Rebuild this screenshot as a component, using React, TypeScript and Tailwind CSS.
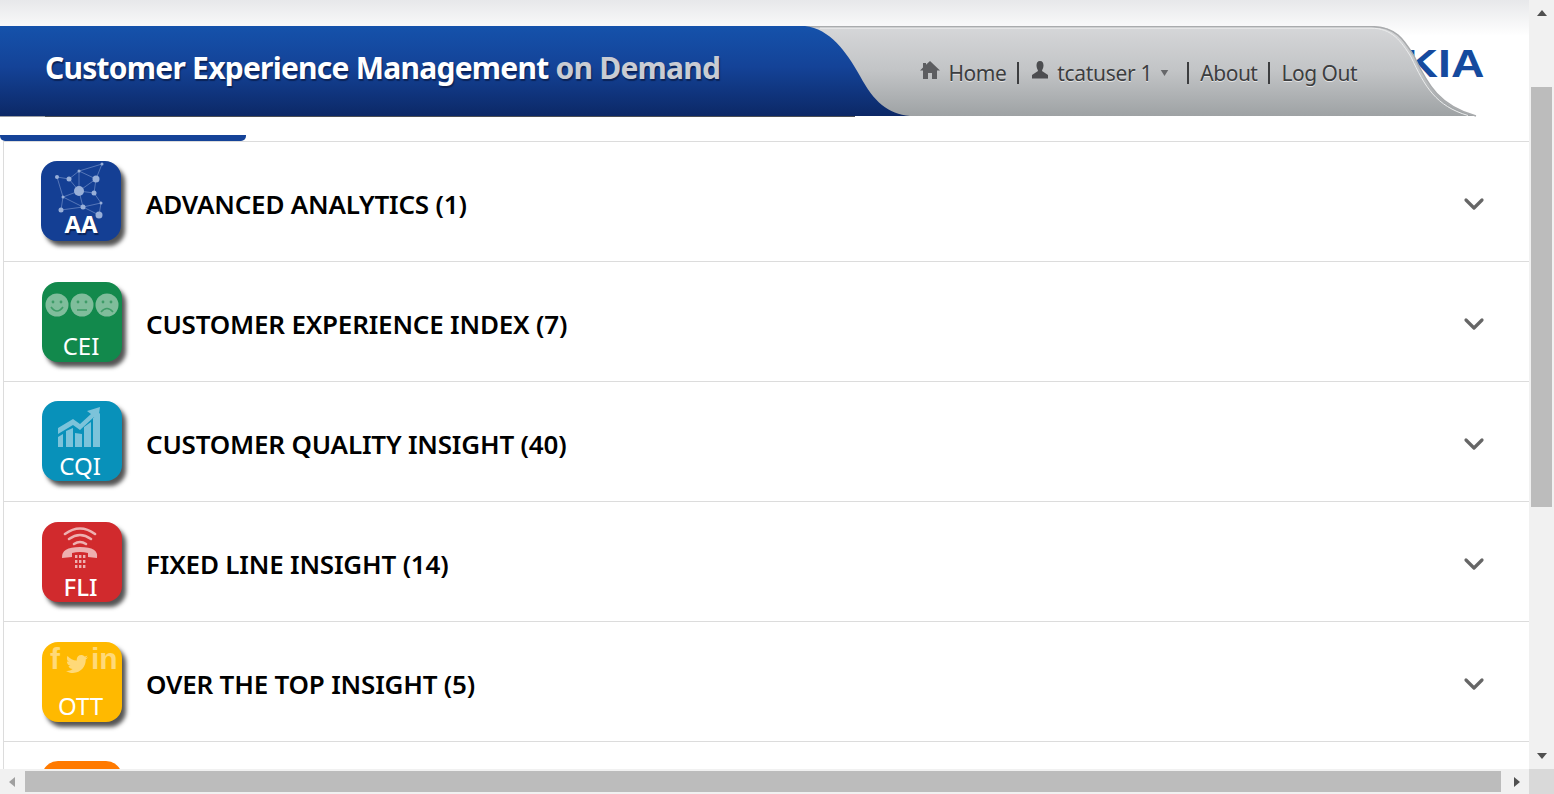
import { ChevronDown } from "lucide-react"
import { FaTwitter } from "react-icons/fa"

const font = "font-['Noto_Sans','Open_Sans',sans-serif]"

function NetworkGlyph() {
  const nodes = [
    [16, 16, 2], [28, 18, 2.5], [38, 10, 1.5], [55, 18, 3.5], [61, 3, 1.5], [38, 30, 5],
    [53, 32, 2.5], [22, 36, 1.5], [42, 46, 2.5], [60, 42, 1.5], [20, 49, 2.5], [58, 54, 3.5],
  ]
  const links = [
    [0, 1], [1, 2], [2, 3], [2, 4], [3, 4], [1, 5], [3, 5], [5, 6], [5, 7], [5, 8], [6, 9],
    [8, 9], [7, 10], [8, 10], [8, 11], [9, 11], [0, 7], [6, 3], [2, 5], [7, 8],
  ]
  return (
    <svg viewBox="0 0 80 60" className="h-[60px] w-20">
      {links.map(([a, b], i) => (
        <line key={i} x1={nodes[a][0]} y1={nodes[a][1]} x2={nodes[b][0]} y2={nodes[b][1]} stroke="#6684c0" strokeWidth="0.8" />
      ))}
      {nodes.map(([x, y, r], i) => (
        <circle key={i} cx={x} cy={y} r={r} fill="#98afd8" />
      ))}
    </svg>
  )
}

function FacesGlyph() {
  const mouths = ["M9 25 Q15 33 21 25", "M35 28 H45", "M59 30 Q65 23 71 30"]
  return (
    <svg viewBox="0 0 80 60" className="h-[60px] w-20">
      {[15, 40, 65].map((cx, i) => (
        <g key={cx}>
          <circle cx={cx} cy={23} r={11.5} fill="#7fbd9b" />
          <circle cx={cx - 4} cy={20} r={1.4} fill="#3f9c68" />
          <circle cx={cx + 4} cy={20} r={1.4} fill="#3f9c68" />
          <path d={mouths[i]} fill="none" stroke="#3f9c68" strokeWidth="1.6" />
        </g>
      ))}
    </svg>
  )
}

function ChartGlyph() {
  return (
    <svg viewBox="0 0 80 60" className="h-[60px] w-20">
      <g fill="#7cc3da">
        <path d="M16 46V36L21 33V46Z" />
        <path d="M24 46V30L31 27V46Z" />
        <path d="M33 46V32L40 33V46Z" />
        <path d="M42 46V26L49 21V46Z" />
        <path d="M51 46V17L58 12V46Z" />
        <path d="M16 27L31 18L38 23L49 13L45 10L58 6L56 20L52 16L38 29L31 24L16 33Z" />
      </g>
    </svg>
  )
}

function PhoneGlyph() {
  return (
    <svg viewBox="0 0 80 60" className="h-[60px] w-20">
      <g fill="none" stroke="#eeb0b0" strokeWidth="2.6" strokeLinecap="round">
        <path d="M23 12Q38 1 53 12" />
        <path d="M27 17Q38 9 49 17" />
        <path d="M32 22Q38 18 44 22" />
      </g>
      <path d="M20 36Q19 25 38 25Q57 25 55 36L46 35V31Q38 29 30 31V35Z" fill="#eeb0b0" />
      <g fill="#eeb0b0">
        {[33, 38, 43].map((y) =>
          [33, 37, 41].map((x) => <rect key={`${x}-${y}`} x={x} y={y} width="2.4" height="3" />)
        )}
      </g>
    </svg>
  )
}

function SocialGlyph() {
  return (
    <div className="relative flex h-[60px] w-20 items-start font-['Liberation_Sans',sans-serif] text-[30px] leading-none font-bold text-[#ffd978]">
      <span className="ml-[8px] mt-[2px]">f</span>
      <FaTwitter className="ml-[6px] mt-[11px] h-[22px] w-[22px]" />
      <span className="ml-[3px] mt-[2px]">in</span>
    </div>
  )
}

interface Tile {
  label: string
  title: string
  bg: string
  place: string
  labelClass: string
  glyph: React.ReactNode
}

const tiles: Tile[] = [
  { label: "AA", title: "ADVANCED ANALYTICS (1)", bg: "bg-[#143f94]", place: "pl-[37px] pt-[19px]", labelClass: "-mt-[9px] font-bold [text-shadow:1px_2px_1px_#0b2358]", glyph: <NetworkGlyph /> },
  { label: "CEI", title: "CUSTOMER EXPERIENCE INDEX (7)", bg: "bg-[#12894c]", place: "pl-[38px] pt-5", labelClass: "-mt-[8px] pr-[2px] font-normal", glyph: <FacesGlyph /> },
  { label: "CQI", title: "CUSTOMER QUALITY INSIGHT (40)", bg: "bg-[#0891ba]", place: "pl-[38px] pt-[19px]", labelClass: "-mt-[7px] pr-[4px] font-normal", glyph: <ChartGlyph /> },
  { label: "FLI", title: "FIXED LINE INSIGHT (14)", bg: "bg-[#d12a2d]", place: "pl-[38px] pt-5", labelClass: "-mt-[7px] pr-[3px] font-medium", glyph: <PhoneGlyph /> },
  { label: "OTT", title: "OVER THE TOP INSIGHT (5)", bg: "bg-[#ffb900]", place: "pl-[38px] pt-5", labelClass: "-mt-[8px] pr-[3px] font-normal", glyph: <SocialGlyph /> },
]

function Row({ tile }: { tile: Tile }) {
  return (
    <div className="flex h-[120px] items-start border-b border-[#dcdcdc] pr-[39px]">
      <div className={`w-[142px] shrink-0 ${tile.place}`}>
        <div className={`flex h-20 w-20 flex-col items-center rounded-2xl text-white shadow-[4px_5px_4px_#555] ${tile.bg}`}>
          {tile.glyph}
          <span className={`text-[24px] leading-6 ${tile.labelClass}`}>{tile.label}</span>
        </div>
      </div>
      <span className="mt-[44px] text-[26px] leading-9 font-semibold tracking-[-0.2px] text-black">
        {tile.title}
      </span>
      <ChevronDown size={32} strokeWidth={2.4} className="ml-auto mt-[46px] text-[#666]" />
    </div>
  )
}

function Header() {
  return (
    <header className="h-[117px] bg-[linear-gradient(#e7e8ea,#ffffff_36px)] pt-[26px]">
      <div className="relative flex h-[91px] items-center">
        <span className="absolute right-[45px] top-[16px] origin-right scale-x-[1.22] font-['Liberation_Sans',sans-serif] text-[38px] leading-[44px] font-bold text-[#154a9e]">
          KIA
        </span>
        <svg viewBox="0 0 1529 91" className="absolute inset-0 h-full w-full" preserveAspectRatio="none">
          <defs>
            <linearGradient id="band" x1="0" y1="0" x2="0" y2="1">
              <stop offset="0" stopColor="#1552ab" />
              <stop offset="0.45" stopColor="#144398" />
              <stop offset="1" stopColor="#0c2866" />
            </linearGradient>
            <linearGradient id="tab" x1="0" y1="0" x2="0" y2="1">
              <stop offset="0" stopColor="#d6d7d9" />
              <stop offset="0.5" stopColor="#c2c4c6" />
              <stop offset="1" stopColor="#9ea2a4" />
            </linearGradient>
          </defs>
          <path d="M800 0H1372C1396 0 1404 14 1414 30C1428 60 1440 80 1476 90H880Z" fill="url(#tab)" />
          <path d="M800 0.7H1372C1396 0.7 1404 14 1414 30C1428 60 1440 80 1476 90" fill="none" stroke="#a9abad" strokeWidth="1.5" />
          <path d="M820 2.2H1371C1392 2.2 1401 15 1411 31C1425 61 1436 80 1468 89.5" fill="none" stroke="#eceded" strokeWidth="1" />
          <path d="M0 0H805C830 3 846 25 860 50C874 76 888 88 910 90H0Z" fill="url(#band)" />
          <path d="M45 90.5H855" stroke="#4c4f55" strokeWidth="1" />
          <path d="M0 90.5H45" stroke="#9a9da3" strokeWidth="1" />
        </svg>
        <h1 className="relative mb-[8px] ml-[45px] text-[30px] leading-10 font-bold tracking-[-0.76px] text-white [text-shadow:1px_2px_1px_#0b2358]">
          Customer Experience Management <span className="text-[#c9ccd3]">on Demand</span>
        </h1>
        <nav className="relative ml-auto mr-[172px] mt-[2px] flex items-center text-[21px] leading-7 tracking-[-0.5px] text-[#3c3d3f] [text-shadow:0_1px_0_#e4e5e6]">
          <svg viewBox="0 0 22 20" className="mb-[5px] mr-[8px] h-[20px] w-[22px]" fill="#5c5d60">
            <path d="M11 1L21 10.5H18V19H13V13H9V19H4V10.5H1L4 7.6V3H7V4.8Z" />
          </svg>
          <span>Home</span>
          <span className="ml-[11px] mr-[11px] h-[22px] w-[2px] bg-[#3c3d3f]" />
          <svg viewBox="0 0 20 20" className="mb-[5px] mr-[7px] h-[20px] w-[20px]" fill="#4c4d50">
            <path d="M10 1C7.5 1 6.5 3 6.5 5.5C6.5 8 7.8 9.5 8 11L2 15V18.5H18V15L12 11C12.2 9.5 13.5 8 13.5 5.5C13.5 3 12.5 1 10 1Z" />
          </svg>
          <span className="tracking-[-0.3px]">tcatuser 1</span>
          <svg viewBox="0 0 10 8" className="ml-[8px] mr-[18px] h-[6px] w-[9px]" fill="#66676a">
            <path d="M0 0H10L5 8Z" />
          </svg>
          <span className="mr-[11px] h-[22px] w-[2px] bg-[#3c3d3f]" />
          <span>About</span>
          <span className="mx-[11px] h-[22px] w-[2px] bg-[#3c3d3f]" />
          <span>Log Out</span>
        </nav>
      </div>
    </header>
  )
}

function VerticalScrollbar() {
  return (
    <div className="flex w-[25px] shrink-0 flex-col items-center bg-[#f1f1f1]">
      <svg viewBox="0 0 10 6" className="mt-[10px] h-[6px] w-[10px]" fill="#505050">
        <path d="M5 0L10 6H0Z" />
      </svg>
      <div className="mt-[71px] h-[420px] w-[21px] bg-[#bcbcbc]" />
      <svg viewBox="0 0 10 6" className="mb-[10px] mt-auto h-[6px] w-[10px]" fill="#505050">
        <path d="M0 0H10L5 6Z" />
      </svg>
    </div>
  )
}

function HorizontalScrollbar() {
  return (
    <div className="flex h-[25px] shrink-0 items-center bg-[#f1f1f1]">
      <svg viewBox="0 0 6 10" className="ml-[9px] mr-[10px] h-[10px] w-[6px]" fill="#a0a0a0">
        <path d="M6 0V10L0 5Z" />
      </svg>
      <div className="h-[21px] w-[1476px] bg-[#bcbcbc]" />
      <svg viewBox="0 0 6 10" className="ml-[13px] h-[10px] w-[6px]" fill="#505050">
        <path d="M0 0L6 5L0 10Z" />
      </svg>
      <div className="ml-auto h-full w-[25px] bg-[#d9d9d9]" />
    </div>
  )
}

export default function App() {
  return (
    <div className={`flex h-screen w-full flex-col overflow-hidden bg-white ${font}`}>
      <div className="flex min-h-0 flex-1">
        <main className="min-w-0 flex-1 overflow-hidden">
          <Header />
          <div className="mt-[18px] h-[6px] w-[246px] rounded-b-[5px] bg-[#154398]" />
          <div className="ml-[3px] border-l border-t border-[#dcdcdc]">
            {tiles.map((tile) => (
              <Row key={tile.label} tile={tile} />
            ))}
            <div className="pl-[38px] pt-[19px]">
              <div className="h-20 w-20 rounded-2xl bg-[#ff7a00]" />
            </div>
          </div>
        </main>
        <VerticalScrollbar />
      </div>
      <HorizontalScrollbar />
    </div>
  )
}
